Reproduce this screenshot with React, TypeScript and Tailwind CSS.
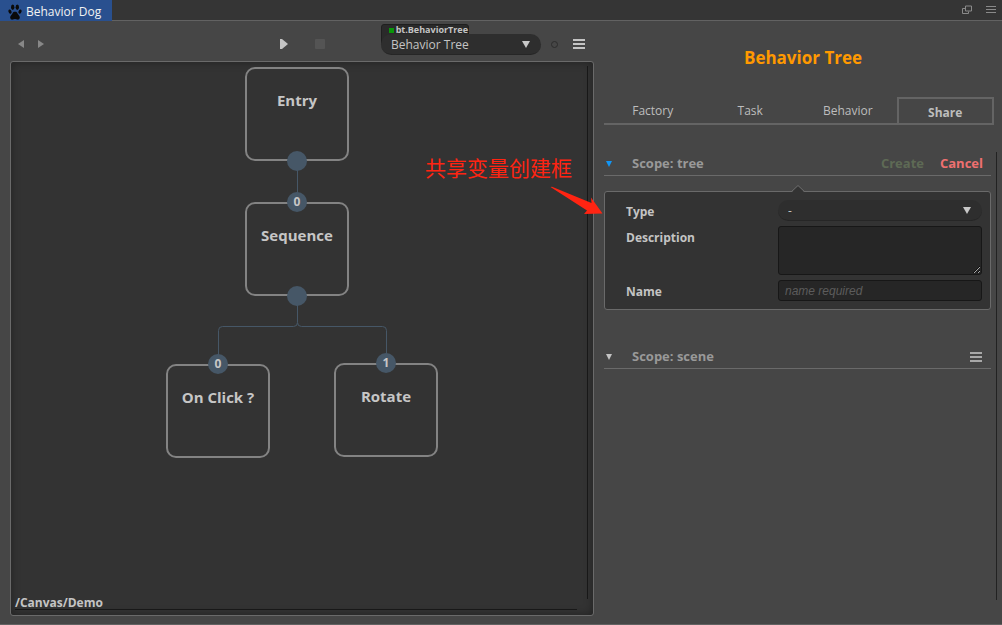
import { useState } from "react";

type TreeNode = { id: string; label: string; place: string; order?: string; output?: boolean };

const nodes: TreeNode[] = [
  { id: "entry", label: "Entry", place: "left-[234px] top-[5px]", output: true },
  { id: "sequence", label: "Sequence", place: "left-[234px] top-[140px]", order: "0", output: true },
  { id: "click", label: "On Click ?", place: "left-[155px] top-[302px]", order: "0" },
  { id: "rotate", label: "Rotate", place: "left-[323px] top-[301px]", order: "1" },
];

function Paw() {
  return (
    <svg width="14" height="18" viewBox="0 0 14 18" fill="#0a0a0a" aria-hidden="true">
      <ellipse cx="4.7" cy="4.2" rx="1.7" ry="2.8" />
      <ellipse cx="9.3" cy="4.2" rx="1.7" ry="2.8" />
      <ellipse cx="2" cy="8.6" rx="1.5" ry="2.2" transform="rotate(-18 2 8.6)" />
      <ellipse cx="12" cy="8.6" rx="1.5" ry="2.2" transform="rotate(18 12 8.6)" />
      <path d="M7 8.6c-1.6 0-2.2 1.4-3 2.6-.9 1.2-2 2-1.8 3.6.2 1.5 1.6 2.2 2.6 1.8.9-.4 1.4-.6 2.2-.6s1.3.2 2.2.6c1 .4 2.4-.3 2.6-1.8.2-1.6-.9-2.4-1.8-3.6-.8-1.2-1.4-2.6-3-2.6z" />
    </svg>
  );
}

function MenuIcon() {
  return (
    <svg width="12" height="10" viewBox="0 0 12 10" fill="currentColor" aria-hidden="true">
      <path d="M0 0h12v2H0zM0 4h12v2H0zM0 8h12v2H0z" />
    </svg>
  );
}

function DownArrow({ className }: { className: string }) {
  return (
    <svg width="8" height="7" viewBox="0 0 8 7" fill="currentColor" className={className} aria-hidden="true">
      <path d="M0 0h8L4 7z" />
    </svg>
  );
}

function Node({ node }: { node: TreeNode }) {
  return (
    <div className={`absolute ${node.place} h-[94px] w-[104px] rounded-[10px] border-2 border-[#838383] bg-[#333333] pt-[21px] text-center text-[15px] leading-5 font-bold text-[#c6c6c6]`}>
      {node.label}
      {node.order && (
        <span className="absolute -top-3 left-10 size-5 rounded-full bg-[#465767] text-xs leading-5">{node.order}</span>
      )}
      {node.output && <span className="absolute -bottom-3 left-10 size-5 rounded-full bg-[#465767]" />}
    </div>
  );
}

function Toolbar() {
  return (
    <div className="grid h-10 grid-cols-[1fr_auto_1fr] items-center pt-[6px]">
      <div className="flex gap-[14px] pl-2 text-[#888888]">
        <button aria-label="Back">
          <svg width="6" height="8" viewBox="0 0 6 8" fill="currentColor"><path d="M6 0v8L0 4z" /></svg>
        </button>
        <button aria-label="Forward">
          <svg width="6" height="8" viewBox="0 0 6 8" fill="currentColor"><path d="M0 0v8l6-4z" /></svg>
        </button>
      </div>
      <div className="flex items-center gap-[27px]">
        <button aria-label="Play">
          <svg width="8" height="10" viewBox="0 0 8 10" fill="#c4c4c4"><path d="M0 0h2l6 5-6 5H0z" /></svg>
        </button>
        <button aria-label="Stop" className="size-[10px] rounded-[1px] bg-[#545454]" />
      </div>
      <div className="flex items-center justify-end pr-[9px]">
        <div className="relative w-40">
          <label htmlFor="component" className="absolute -top-[10px] left-0 flex h-5 w-[88px] items-start gap-[2px] rounded-t-[3px] border border-[#1f1f1f] bg-[#2a2a2a] pl-[7px] text-[9px] leading-[10px] font-bold whitespace-nowrap text-[#c4c4c4]">
            <span className="mt-[3px] size-[5px] bg-[#0a960a]" />
            bt.BehaviorTree
          </label>
          <select id="component" className="relative block h-[21px] w-full appearance-none rounded-full border-b border-[#262626] bg-[#2e2e2e] pt-[2px] pl-[10px] text-xs text-[#c4c4c4] outline-none">
            <option>Behavior Tree</option>
          </select>
          <DownArrow className="pointer-events-none absolute top-[7px] right-[11px] text-[#c8c8c8]" />
        </div>
        <span className="ml-[10px] size-[7px] rounded-full border border-[#2c2c2c]" />
        <button aria-label="Menu" className="ml-[15px] text-[#c4c4c4]"><MenuIcon /></button>
      </div>
    </div>
  );
}

function Canvas() {
  return (
    <div className="relative flex flex-1 flex-col rounded-[3px] border border-[#6a6a6a] bg-[#333333] shadow-[inset_0_0_10px_rgba(0,0,0,0.35)]">
      <div className="relative flex-1">
        <svg width="440" height="400" className="absolute top-0 left-0" fill="none" stroke="#465767" aria-hidden="true">
          <path d="M286.500 99v41M286.500 234v26.500M286.500 260.500q0 4-4 4h-71q-4 0-4 4v34M286.500 260.500q0 4 4 4h81q4 0 4 4v34" />
        </svg>
        {nodes.map((n) => <Node key={n.id} node={n} />)}
      </div>
      <div className="px-1 pb-1 text-xs leading-4 font-bold text-[#c4c4c4]">/Canvas/Demo</div>
      <div className="absolute right-4 bottom-[5px] left-1 h-px bg-[#181818]" />
      <div className="absolute top-1 right-[5px] bottom-4 w-px bg-[#181818]" />
    </div>
  );
}

const tabs = ["Factory", "Task", "Behavior", "Share"];

function Inspector() {
  const [active, setActive] = useState("Share");
  return (
    <section className="flex flex-[398] basis-0 flex-col">
      <h1 className="pt-[25px] text-center text-[17px] leading-6 font-bold text-[#ff9900]">Behavior Tree</h1>
      <div role="tablist" className="mt-[27px] mr-2 grid h-7 grid-cols-4">
        {tabs.map((t) => (
          <button
            key={t}
            role="tab"
            aria-selected={t === active}
            onClick={() => setActive(t)}
            className={t === active ? "border-2 border-[#646464] pt-1 text-xs font-bold text-[#bdbdbd]" : "border-b-2 border-[#646464] pt-[2px] text-xs text-[#bdbdbd]"}
          >
            {t}
          </button>
        ))}
      </div>
      <div className="mt-[27px] mb-6 flex flex-1 gap-[5px] pr-[5px]">
        <div className="flex-1">
          <header className="flex h-6 items-center border-b border-[#6a6a6a] pr-2 text-[13px] font-bold text-[#999999]">
            <button aria-label="Collapse tree scope" className="w-7 pl-[2px] text-[#1296f5]">
              <svg width="6" height="6" viewBox="0 0 6 6" fill="currentColor"><path d="M0 0h6L3 6z" /></svg>
            </button>
            <h2 className="flex-1">Scope: tree</h2>
            <button className="text-[#5e6a55]">Create</button>
            <button className="ml-4 text-[#ee7070]">Cancel</button>
          </header>
          <form className="relative mt-[15px] grid grid-cols-[152px_1fr] gap-y-[5px] rounded-[3px] border border-[#6a6a6a] bg-[#333333] py-2 pr-2 pl-[21px] text-xs font-bold text-[#c4c4c4]">
            <svg width="14" height="8" viewBox="0 0 14 8" className="absolute -top-[7px] left-1/2 -translate-x-1/2" aria-hidden="true">
              <path d="M1 7l6-6 6 6v1H1z" fill="#333333" />
              <path d="M.500 6.500L7 .500l6.500 6" fill="none" stroke="#6a6a6a" />
            </svg>
            <label htmlFor="type" className="pt-1">Type</label>
            <div className="relative">
              <select id="type" className="block h-[21px] w-full appearance-none rounded-full border-b border-[#262626] bg-[#2e2e2e] pt-[2px] pl-[10px] font-normal outline-none">
                <option>-</option>
              </select>
              <DownArrow className="pointer-events-none absolute top-[7px] right-[11px] text-[#c8c8c8]" />
            </div>
            <label htmlFor="description" className="pt-1">Description</label>
            <textarea id="description" className="block h-[49px] w-full rounded-[3px] border border-[#171717] bg-[#262626] px-[6px] font-normal outline-none" />
            <label htmlFor="name" className="pt-1">Name</label>
            <input id="name" placeholder="name required" className="h-[21px] w-full rounded-[3px] border border-[#171717] bg-[#262626] px-[6px] font-['Liberation_Sans',sans-serif] font-normal outline-none placeholder:text-[#5c5c5c] placeholder:italic" />
          </form>
          <header className="mt-[35px] flex h-6 items-center border-b border-[#6a6a6a] pr-[9px] text-[13px] font-bold text-[#999999]">
            <button aria-label="Collapse scene scope" className="w-7 pl-[2px] text-[#c4c4c4]">
              <svg width="6" height="6" viewBox="0 0 6 6" fill="currentColor"><path d="M0 0h6L3 6z" /></svg>
            </button>
            <h2 className="flex-1">Scope: scene</h2>
            <button aria-label="Scope menu" className="text-[#a8a8a8]"><MenuIcon /></button>
          </header>
        </div>
        <div className="w-px bg-[#222222]" />
      </div>
    </section>
  );
}

export default function App() {
  return (
    <div className="flex min-h-screen flex-col border-b border-[#626262] bg-[#464646] font-['Open_Sans','Noto_Sans_CJK_SC',sans-serif]">
      <div className="flex h-[21px] border-b border-[#626262] bg-[#353535]">
        <button className="-mb-px flex items-center gap-1 bg-[#29508f] pt-[2px] pr-[11px] pl-2 text-xs text-[#f2f2f2]">
          <Paw />
          Behavior Dog
        </button>
        <div className="ml-auto flex items-center gap-[14px] pr-[6px] pb-[2px] text-[#8a8a8a]">
          <button aria-label="Pop out">
            <svg width="10" height="9" viewBox="0 0 10 9" fill="none" stroke="currentColor"><path d="M3.500 1h6v5h-6zM3.500 3.500h-3v5h6V6.500" /></svg>
          </button>
          <button aria-label="Panel menu">
            <svg width="10" height="7" viewBox="0 0 10 7" fill="none" stroke="currentColor"><path d="M0 .500h10M0 3.500h10M0 6.500h10" /></svg>
          </button>
        </div>
      </div>
      <main className="relative flex flex-1 gap-[10px] pl-[10px]">
        <section className="flex flex-[584] basis-0 flex-col pb-2">
          <Toolbar />
          <Canvas />
        </section>
        <Inspector />
        <p className="absolute top-[130px] left-[425px] font-['Noto_Sans_CJK_SC',sans-serif] text-[21px] leading-8 text-[#ff2412]">共享变量创建框</p>
        <svg width="54" height="30" viewBox="0 0 54 30" fill="#ff2412" className="absolute top-[165px] left-[550px]" aria-hidden="true">
          <path d="M.500 1L2 .800 41.500 17l-.500-5.500L52.500 27.500 34 28l3-3.500z" />
        </svg>
      </main>
    </div>
  );
}
